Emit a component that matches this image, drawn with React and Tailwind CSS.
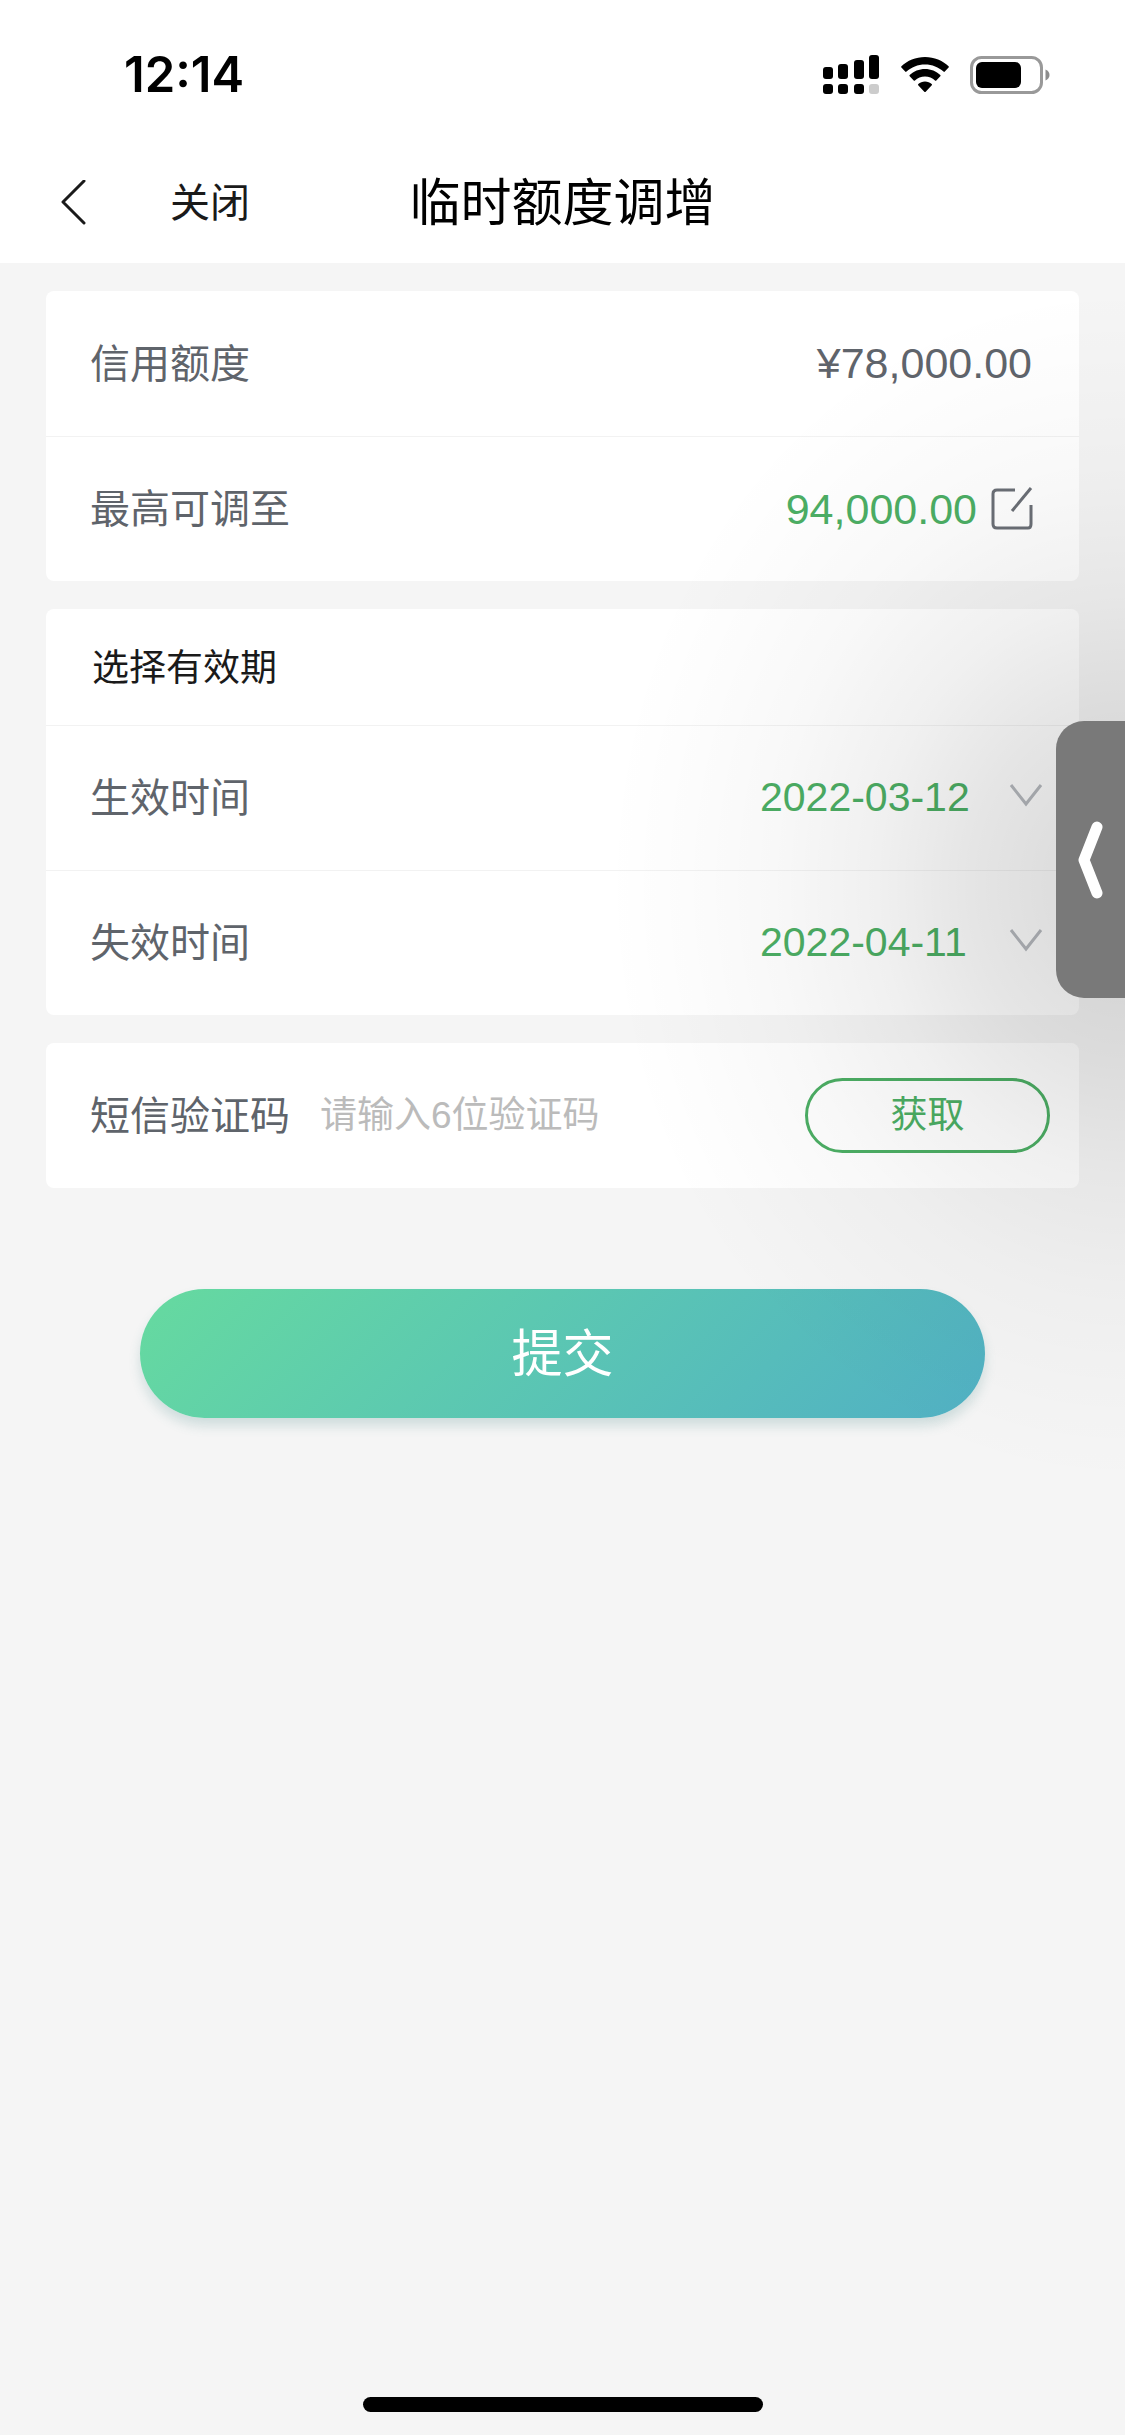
import React, { useState } from 'react'

function StatusBar() {
  return (
    <div className="flex h-[150px] items-center justify-between pl-[124px] pr-[73px]">
      <span className="font-['Inter',sans-serif] text-[49px] font-semibold text-black">12:14</span>
      <div className="flex items-center gap-[21px]">
        <svg width="57" height="40" viewBox="0 0 57 40" aria-hidden="true">
          <rect x="0" y="12" width="10" height="12" rx="3" />
          <rect x="15" y="9" width="10" height="15" rx="3" />
          <rect x="31" y="5" width="10" height="19" rx="3" />
          <rect x="46" y="0" width="10" height="24" rx="3" />
          <rect x="0" y="29" width="10" height="10" rx="3" />
          <rect x="15" y="29" width="10" height="10" rx="3" />
          <rect x="31" y="29" width="10" height="10" rx="3" />
          <rect x="46" y="29" width="10" height="10" rx="3" fill="#cccccc" />
        </svg>
        <svg width="48" height="36" viewBox="0 0 48 36" aria-hidden="true">
          <path d="M24 0C14.700 0 6.300 3.600 0.400 9.300c-.4.400-.4.900 0 1.300l3.800 4c.4.400.9.400 1.300 0C10.300 10 16.800 7.400 24 7.400s13.700 2.600 18.500 7.200c.4.400.9.400 1.300 0l3.800-4c.4-.4.400-.9 0-1.300C41.700 3.600 33.300 0 24 0Z" />
          <path d="M24 12c-5.900 0-11.300 2.300-15.300 6-.4.400-.4.900 0 1.300l4 4.200c.4.400.9.400 1.300 0 2.600-2.400 6.100-3.900 10-3.900s7.400 1.500 10 3.900c.4.400.9.400 1.300 0l4-4.200c.4-.4.400-.9 0-1.300-4-3.700-9.400-6-15.300-6Z" />
          <path d="M24 24.500c-2.600 0-4.900.9-6.700 2.400-.4.400-.4.900-.1 1.300l6.100 6.500c.4.400 1 .4 1.400 0l6.100-6.500c.4-.4.300-.9-.1-1.300-1.800-1.500-4.100-2.400-6.700-2.400Z" />
        </svg>
        <svg width="82" height="38" viewBox="0 0 82 38" aria-hidden="true">
          <rect x="1.500" y="1.500" width="70" height="35" rx="10" fill="none" stroke="#999999" strokeWidth="3" />
          <rect x="6" y="6" width="45" height="26" rx="6" />
          <path d="M75.500 13.500c2.600 1 4 3.200 4 5.500s-1.400 4.500-4 5.500Z" fill="#8c8c8c" />
        </svg>
      </div>
    </div>
  )
}

function NavBar() {
  return (
    <nav className="grid h-[106px] grid-cols-[1fr_auto_1fr] items-center">
      <div className="flex items-center gap-[84px] pl-[61px]">
        <button type="button" aria-label="返回">
          <svg width="25" height="46" viewBox="0 0 25 46" fill="none" stroke="#1a1a1a" strokeWidth="3" strokeLinecap="round" strokeLinejoin="round">
            <path d="M23 1 2 22l21 21" />
          </svg>
        </button>
        <button type="button" className="text-[40px] leading-none text-[#1a1a1a]">关闭</button>
      </div>
      <h1 className="text-[51px] leading-none text-black">临时额度调增</h1>
    </nav>
  )
}

function Card({ children }) {
  return <section className="rounded-lg bg-white">{children}</section>
}

function Row({ children }) {
  return (
    <div className="flex h-[145px] items-center justify-between border-[#f2f2f2] pl-[44px] not-first:border-t">
      {children}
    </div>
  )
}

function DateRow({ id, label, value }) {
  return (
    <Row>
      <label htmlFor={id} className="text-[40px] text-[#5f646b]">{label}</label>
      <div className="relative mr-[36px] w-[283px]">
        <select id={id} defaultValue={value} className="w-full appearance-none bg-transparent text-[41px] text-[#4cae64]">
          <option value={value}>{value}</option>
        </select>
        <svg className="pointer-events-none absolute right-0 top-1/2 -translate-y-1/2" width="34" height="32" viewBox="0 0 34 32" fill="none" stroke="#b7babf" strokeWidth="3">
          <path d="M2 3l15 19L32 3" />
        </svg>
      </div>
    </Row>
  )
}

export default function App() {
  const [code, setCode] = useState('')

  return (
    <div className="relative flex min-h-screen flex-col overflow-hidden bg-[#f5f5f5] font-['Liberation_Sans','Noto_Sans_CJK_SC',sans-serif]">
      <header className="bg-white pb-[7px]">
        <StatusBar />
        <NavBar />
      </header>

      <main className="flex flex-1 flex-col gap-7 px-[46px] pt-7">
        {/* Credit limit */}
        <Card>
          <Row>
            <span className="text-[40px] text-[#5f646b]">信用额度</span>
            <span className="pr-[47px] text-[43px] text-[#5f646b]">¥78,000.00</span>
          </Row>
          <Row>
            <span className="text-[40px] text-[#5f646b]">最高可调至</span>
            <div className="flex items-center gap-[14px] pr-[46px]">
              <span className="text-[43px] text-[#4cae64]">94,000.00</span>
              <button type="button" aria-label="修改额度">
                <svg width="42" height="44" viewBox="0 0 42 44" fill="none" stroke="#6b6f76" strokeWidth="3">
                  <path d="M24 3H6Q2 3 2 7v30q0 4 4 4h31q3 0 3-4V18" />
                  <path d="M21 24 40 1" />
                </svg>
              </button>
            </div>
          </Row>
        </Card>

        {/* Validity period */}
        <Card>
          <h2 className="flex h-[116px] items-center pl-[46px] pt-1 text-[37px] text-[#1a1a1a]">选择有效期</h2>
          <DateRow id="start-date" label="生效时间" value="2022-03-12" />
          <DateRow id="end-date" label="失效时间" value="2022-04-11" />
        </Card>

        {/* SMS code */}
        <Card>
          <Row>
            <label htmlFor="sms-code" className="shrink-0 text-[40px] text-[#5f646b]">短信验证码</label>
            <input
              id="sms-code"
              type="text"
              inputMode="numeric"
              maxLength={6}
              value={code}
              onChange={(e) => setCode(e.target.value)}
              placeholder="请输入6位验证码"
              className="ml-[30px] min-w-0 flex-1 bg-transparent text-[37px] text-[#5f646b] outline-none placeholder:text-[#bbbbbb]"
            />
            <button type="button" className="mr-[29px] flex h-[75px] w-[245px] shrink-0 items-center justify-center rounded-full border-3 border-[#4cae64] text-[37px] text-[#4cae64]">
              获取
            </button>
          </Row>
        </Card>

        <button
          type="submit"
          className="mx-[94px] mt-[73px] flex h-[129px] items-center justify-center rounded-full bg-linear-135 from-[#66da9f] to-[#51b0c4] pt-1 text-[51px] text-white shadow-[0_8px_12px_rgba(60,130,130,0.2)]"
        >
          提交
        </button>
      </main>

      <footer className="flex justify-center pb-[23px]">
        <div className="h-[15px] w-[400px] rounded-full bg-black" />
      </footer>

      {/* Side drawer handle and the shade around it */}
      <div className="pointer-events-none absolute right-0 top-[285px] h-[1200px] w-[520px] bg-[radial-gradient(farthest-side_at_right,rgba(0,0,0,0.15)_0%,rgba(0,0,0,0.13)_15%,rgba(0,0,0,0.1)_30%,rgba(0,0,0,0.06)_48%,rgba(0,0,0,0.027)_68%,rgba(0,0,0,0.01)_85%,transparent_100%)]" />
      <button
        type="button"
        aria-label="展开侧栏"
        className="absolute right-0 top-[721px] flex h-[277px] w-[69px] items-center rounded-l-[28px] bg-[#797979] pl-[22px]"
      >
        <svg width="26" height="80" viewBox="0 0 26 80" fill="none" stroke="white" strokeWidth="11" strokeLinecap="round" strokeLinejoin="round">
          <path d="M19 7 6 40l13 33" />
        </svg>
      </button>
    </div>
  )
}
